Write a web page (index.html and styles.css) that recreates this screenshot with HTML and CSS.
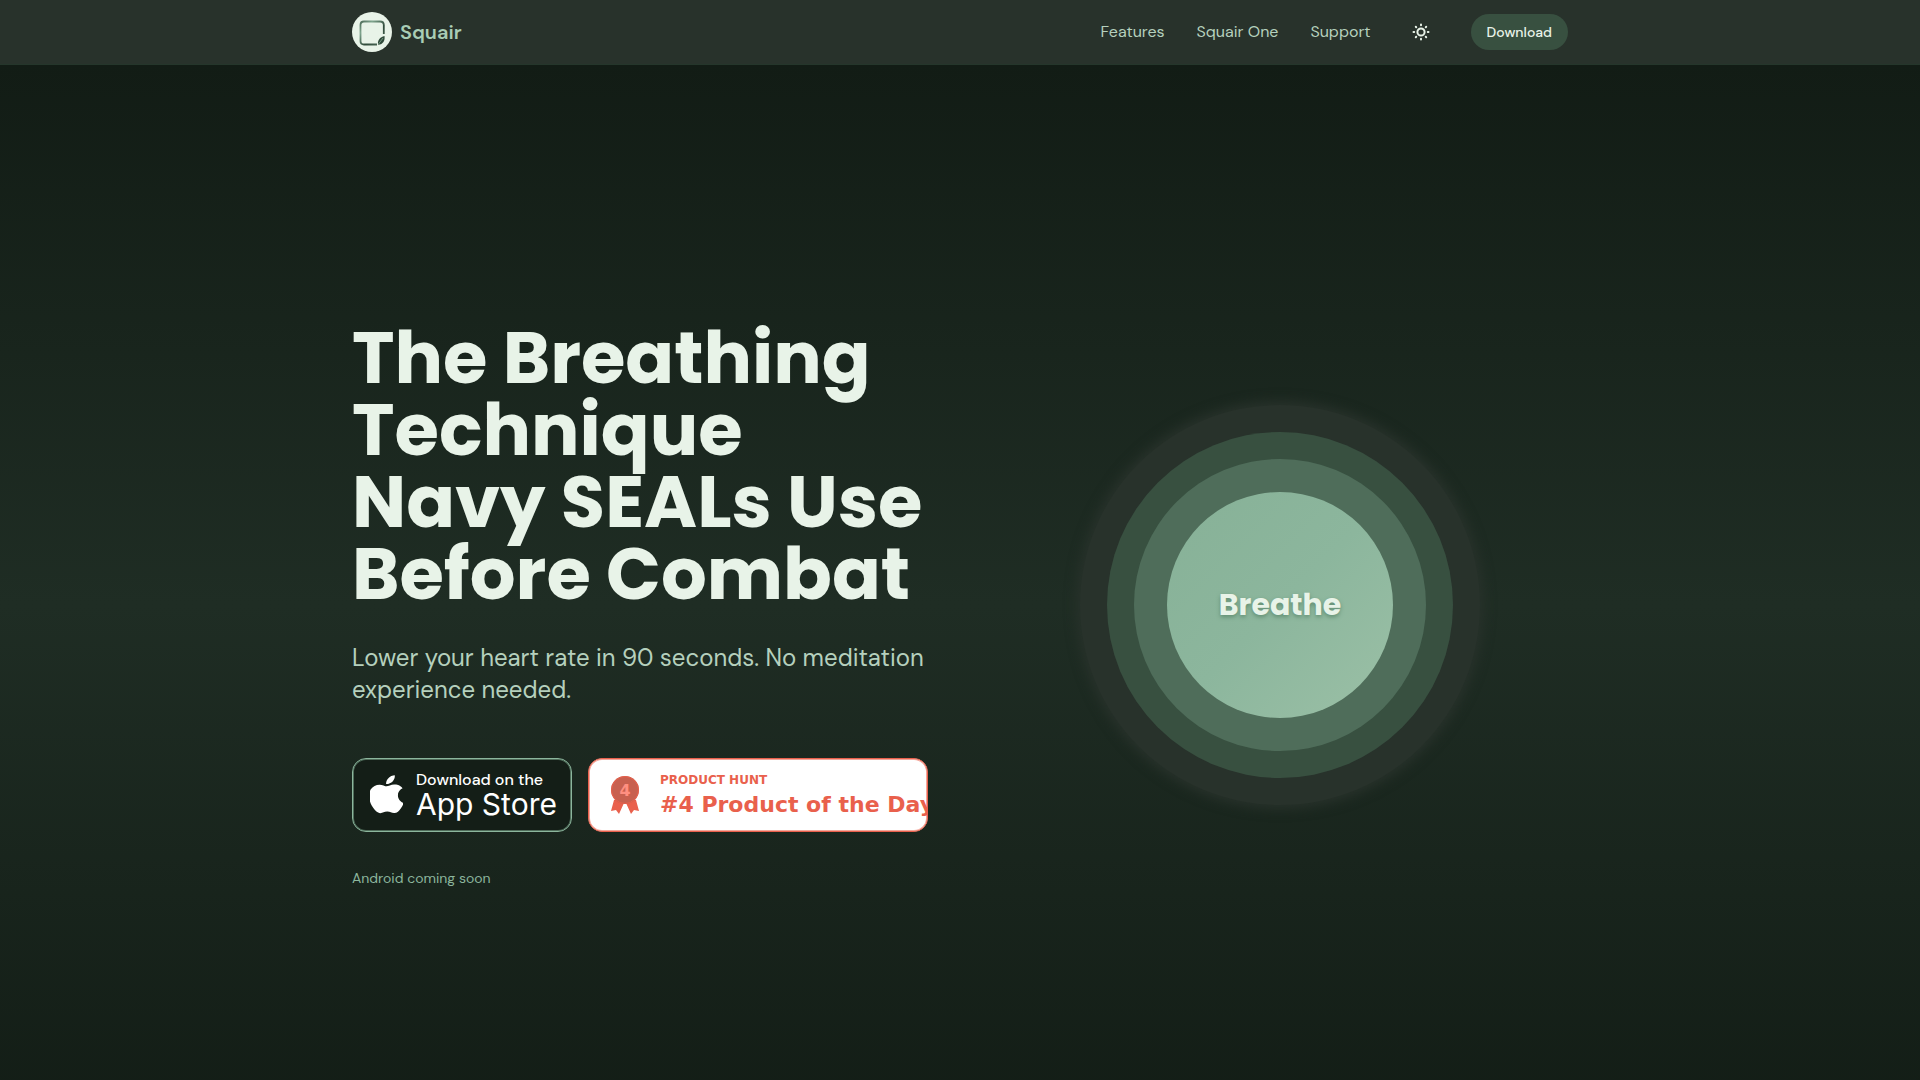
FILE: index.html
```html
<!DOCTYPE html>
<html lang="en">
<head>
<meta charset="utf-8">
<meta name="viewport" content="width=device-width, initial-scale=1">
<title>Squair</title>
<link rel="stylesheet" href="styles.css">
</head>
<body>
<header class="site-header">
  <div class="container header-row">
    <a class="brand" href="#">
      <svg class="brand-mark" viewBox="0 0 40 40" aria-hidden="true">
        <defs><linearGradient id="frame" x1="0" y1="0" x2="1" y2="1"><stop offset="0" stop-color="#4f6d5a"/><stop offset=".25" stop-color="#7fa58e"/><stop offset=".6" stop-color="#2f4a3a"/><stop offset="1" stop-color="#4f6d5a"/></linearGradient></defs>
        <circle cx="20" cy="20" r="20" fill="#e8f3e8"/>
        <path d="M25 32.500H12q-3.500 0-3.500-3.500V13q0-3.500 3.500-3.500H28q3.800 0 3.800 3.500V22" fill="none" stroke="url(#frame)" stroke-width="1.800"/>
        <path d="M26.200 32.800C25 28.500 28 25 32.500 24C33.200 28.500 31 32.500 26.200 32.800Z" fill="#2f4a3a"/>
        <path d="M26.500 32L31 26" stroke="#8cb69d" stroke-width=".7"/>
      </svg>
      <span>Squair</span>
    </a>
    <nav class="nav">
      <a href="#">Features</a>
      <a href="#">Squair One</a>
      <a href="#">Support</a>
      <button class="theme-toggle" type="button" aria-label="Toggle theme">
        <svg viewBox="0 0 20 20" aria-hidden="true"><circle cx="10" cy="10" r="3.600"/><path d="M10 2.500v.7M10 16.800v.7M2.500 10h.7M16.800 10h.7M4.800 4.800l.4.400M14.800 14.800l.4.400M4.800 15.200l.4-.4M14.800 5.200l.4-.4"/></svg>
      </button>
      <a class="download" href="#">Download</a>
    </nav>
  </div>
</header>
<main class="hero">
  <div class="container hero-grid">
    <div class="copy">
      <h1>The Breathing<br>Technique<br>Navy SEALs Use<br>Before Combat</h1>
      <p class="lead">Lower your heart rate in 90 seconds. No meditation<br>experience needed.</p>
      <div class="badges">
        <a class="badge store" href="#">
          <svg class="apple" viewBox="3.500 2 28 38.500" preserveAspectRatio="none" aria-hidden="true"><path fill="#fff" d="M27.200 21.400c0-4.400 3.700-6.600 3.900-6.700-2.100-3.100-5.400-3.500-6.600-3.500-2.800-.3-5.500 1.700-6.900 1.700s-3.600-1.600-5.900-1.600c-3.100 0-5.900 1.800-7.500 4.500-3.200 5.600-.8 13.800 2.300 18.300 1.500 2.200 3.300 4.700 5.700 4.600 2.300-.1 3.200-1.500 5.900-1.500 2.800 0 3.600 1.500 6 1.400 2.500 0 4-2.200 5.500-4.400 1.800-2.600 2.500-5.100 2.500-5.200-.1 0-4.900-1.900-4.900-7.600zM22.700 8.200C23.900 6.600 24.800 4.500 24.500 2.300c-1.800.1-4.100 1.200-5.400 2.800-1.200 1.300-2.200 3.600-1.900 5.600 2 .1 4.200-1 5.500-2.500z"/></svg>
          <span class="badge-text"><span class="store-small">Download on the</span><span class="store-big">App Store</span></span>
        </a>
        <a class="badge hunt" href="#">
          <svg class="medal" viewBox="0 0 30 38" aria-hidden="true"><path d="M4 24L1 35l5-1 3 4 5-11h2l5 11 3-4 5 1-3-11z" fill="#e9604c"/><circle cx="15" cy="14" r="14" fill="#c8604f"/><circle cx="15" cy="14" r="13.500" fill="none" stroke="#e9604c"/><text x="15" y="20" text-anchor="middle" class="medal-number">4</text></svg>
          <span class="badge-text"><span class="hunt-small">PRODUCT HUNT</span><span class="hunt-big">#4 Product of the Day</span></span>
        </a>
      </div>
      <p class="note">Android coming soon</p>
    </div>
    <div class="visual">
      <div class="ring halo"><div class="ring outer"><div class="ring middle"><div class="ring core">Breathe</div></div></div></div>
    </div>
  </div>
</main>
</body>
</html>
```
FILE: styles.css
```css
* { box-sizing: border-box; }
body {
  margin: 0;
  background: #141e17;
  color: #e8f3e8;
  font-family: "DM Sans", Inter, sans-serif;
}
a { color: inherit; text-decoration: none; }
.container { width: 100%; max-width: 1280px; margin: 0 auto; padding: 0 32px; }
.site-header { background: #28322b; border-bottom: 1px solid #25362b; }
.header-row { display: flex; align-items: center; justify-content: space-between; height: 64px; }
.brand { display: flex; align-items: center; gap: 8px; color: #a9cdb5; font-size: 20px; font-weight: 600; }
.brand-mark { width: 40px; height: 40px; }
.nav { display: flex; align-items: center; gap: 32px; color: #b5d0bd; font-size: 16px; line-height: 24px; }
.nav > a { padding-bottom: 1px; }
.theme-toggle { display: flex; padding: 8px; border: 0; background: none; }
.theme-toggle svg { width: 20px; height: 20px; fill: none; stroke: #e8f3e8; stroke-width: 2; stroke-linecap: round; }
.nav > .download { padding: 8px 16px; border-radius: 18px; background: #385040; color: #e8f3e8; font-size: 14px; font-weight: 500; line-height: 20px; }
.hero {
  display: flex;
  align-items: center;
  min-height: 100vh;
  background: linear-gradient(#121c15, #1f2d24 50%, #121c15);
}
.hero-grid { display: grid; grid-template-columns: 1fr 1fr; gap: 64px; align-items: center; }
.copy { min-width: 0; }
h1 { margin: 0 0 32px; font-family: Poppins, Inter, sans-serif; font-size: 72px; font-weight: 700; line-height: 72px; white-space: nowrap; }
.lead { margin: 0 0 52px; color: #b5d0bd; font-size: 24px; line-height: 32px; white-space: nowrap; }
.badges { display: flex; gap: 16px; }
.badge { display: flex; align-items: center; height: 74px; border: 1px solid #8cb69d; border-radius: 14px; overflow: hidden; white-space: nowrap; }
.badge-text { display: flex; flex-direction: column; }
.store { width: 220px; padding-left: 17px; gap: 13px; background: #141e17; box-shadow: inset 0 0 0 1px #4f6d5a; color: #fff; }
.apple { width: 33px; height: 40px; flex: none; }
.store-small { font-size: 16px; font-weight: 500; line-height: 20px; }
.store-big { padding-bottom: 2px; font-family: Inter, sans-serif; font-size: 30px; line-height: 28px; }
.hunt { flex: 1; padding-left: 21px; gap: 20px; border-color: #e9604c; background: #fff; box-shadow: inset 0 0 0 1px #f4a79b; color: #e9604c; font-family: "DejaVu Sans", sans-serif; font-weight: 700; }
.medal { width: 30px; height: 38px; flex: none; }
.medal-number { fill: #ff8f80; font: 700 16px "DejaVu Sans", sans-serif; }
.hunt-small { font-size: 12px; line-height: 20px; }
.hunt-big { font-size: 22px; line-height: 30px; }
.note { margin: 36px 0 0; color: #8cb69d; font-size: 14px; line-height: 20px; }
.visual { display: flex; justify-content: center; }
.ring { display: grid; flex: none; place-items: center; border-radius: 50%; }
.halo { width: 400px; height: 400px; background: #28322b; box-shadow: 0 0 12px 4px #28322b; }
.outer { width: 346px; height: 346px; background: #385040; }
.middle { width: 292px; height: 292px; background: #4f6d5a; }
.core { width: 226px; height: 226px; background: linear-gradient(135deg, #87b197, #8cb69d 50%, #9bc0a6); font-family: Poppins, Inter, sans-serif; font-size: 30px; font-weight: 700; text-shadow: 0 2px 4px #5f8c70; }
```
